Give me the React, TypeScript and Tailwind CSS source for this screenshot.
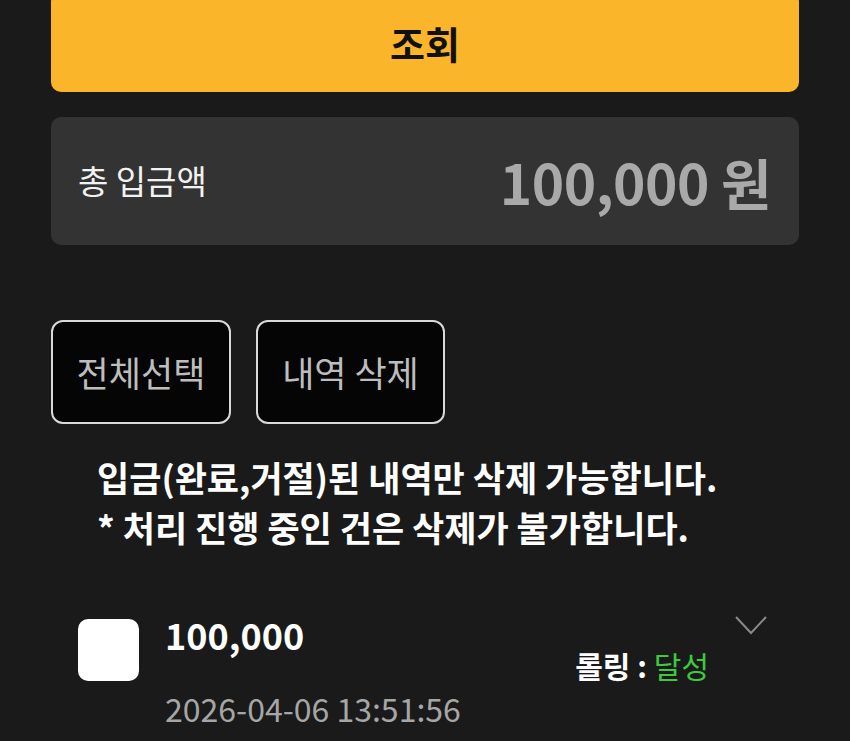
const KR = "font-['Noto_Sans_CJK_KR','Noto_Sans',sans-serif]";

export default function App() {
  return (
    <div className={`min-h-[741px] bg-[#1a1a1a] overflow-hidden ${KR}`}>
      <div className="px-[51px]">
        {/* search button */}
        <button className="-mt-2 h-[100px] w-full rounded-[10px] bg-[#fbb52a] text-[38px] font-bold text-[#111] flex items-center justify-center">
          조회
        </button>

        {/* total amount */}
        <div className="mt-[25px] h-[128px] rounded-[10px] bg-[#333333] flex items-center justify-between pl-[27px] pr-[28px]">
          <span className="text-[33px] text-[#f2f2f2]">총 입금액</span>
          <span className="text-[55px] font-bold text-[#a9a9a9] tracking-[-0.5px]">100,000 원</span>
        </div>

        {/* actions */}
        <div className="mt-[75px] flex gap-[25px]">
          <button className="h-[104px] w-[180px] rounded-[12px] border-2 border-[#d9d9d9] bg-[#050505] text-[35px] text-[#bdbdbd]">
            전체선택
          </button>
          <button className="h-[104px] w-[189px] rounded-[12px] border-2 border-[#d9d9d9] bg-[#050505] text-[35px] text-[#bdbdbd]">
            내역 삭제
          </button>
        </div>

        <div className="mt-[28px] pl-[46px] text-[35px] font-bold leading-[50px] text-white whitespace-nowrap">
          <p>입금(완료,거절)된 내역만 삭제 가능합니다.</p>
          <p>* 처리 진행 중인 건은 삭제가 불가합니다.</p>
        </div>

        {/* history row */}
        <div className="mt-[51px] flex pl-[27px] pr-[31px]">
          <div className="mt-[16px] h-[62px] w-[61px] shrink-0 rounded-[10px] bg-white" />
          <div className="ml-[26px] flex flex-col">
            <span className="mt-[9px] text-[36px] font-bold leading-[44px] text-white">100,000</span>
            <span className="mt-[34px] text-[32px] leading-[36px] text-[#a6a6a6]">2026-04-06 13:51:56</span>
          </div>
          <div className="ml-auto flex flex-col items-end">
            <svg width="34" height="20" viewBox="0 0 34 20" className="mt-[12px]">
              <path d="M2 2 L17 18 L32 2" fill="none" stroke="#8a8a8a" strokeWidth="2" />
            </svg>
            <div className="mt-[10px] mr-[59px] text-[30px] leading-[40px] font-bold text-white">
              롤링 : <span className="font-normal text-[#3ec93e]">달성</span>
            </div>
          </div>
        </div>
      </div>
    </div>
  );
}
